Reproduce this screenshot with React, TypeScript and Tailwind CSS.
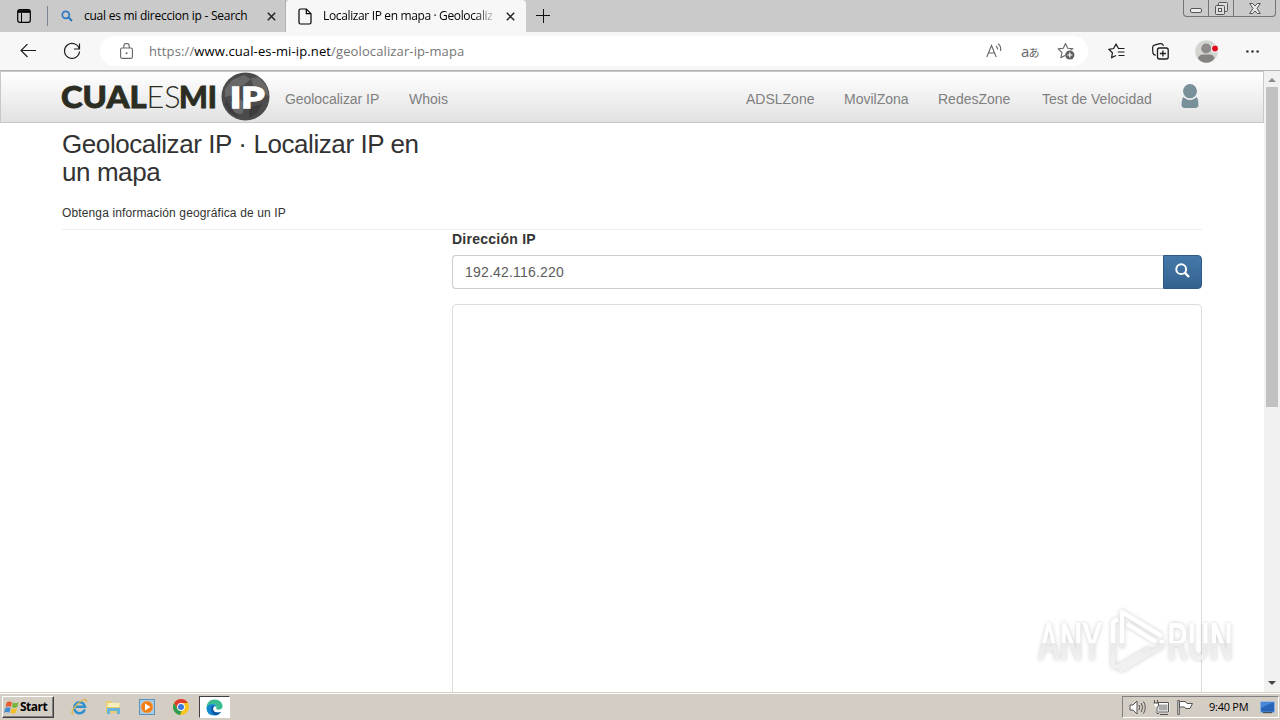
import type { ReactNode } from "react";

const UI = "font-['Open_Sans','Noto_Sans',sans-serif]";
const ARIAL = "font-['Liberation_Sans',Arial,sans-serif]";

const RIGHT_LINKS = [
  { label: "ADSLZone", className: "w-[98px]" },
  { label: "MovilZona", className: "w-[94px]" },
  { label: "RedesZone", className: "w-[104px]" },
  { label: "Test de Velocidad", className: "w-[139px]" },
] as const;

function Icon({ className = "", box, children }: { className?: string; box: string; children: ReactNode }) {
  return (
    <svg className={`block shrink-0 ${className}`} viewBox={box} fill="none" stroke="currentColor" aria-hidden="true">
      {children}
    </svg>
  );
}

function CloseIcon() {
  return (
    <Icon box="0 0 9 9" className="h-[9px] w-[9px] text-[#222]">
      <path d="M.8.8l7.4 7.4M8.2.8.8 8.2" strokeWidth="1.5" />
    </Icon>
  );
}

function TabStrip() {
  return (
    <div className={`flex h-8 bg-[#cacaca] text-[12px] text-black ${UI}`}>
      <div className="flex h-8 w-[286px] shrink-0 items-center border-r border-[#b0b0b0]">
        <Icon box="0 0 14 14" className="ml-[17px] h-[14px] w-[14px]">
          <rect x=".7" y=".7" width="12.6" height="12.6" rx="2" strokeWidth="1.2" />
          <path d="M1 2.500h12" strokeWidth="2.600" />
          <path d="M4.500 4v9" strokeWidth="1" />
        </Icon>
        <span className="ml-4 h-5 w-px bg-[#7c8490]" />
        <Icon box="0 0 12 12" className="ml-[13px] h-3 w-3 text-[#2a78c4]">
          <circle cx="4.8" cy="4.8" r="3.5" strokeWidth="1.7" />
          <path d="M7.3 7.3l3.7 3.7" strokeWidth="2" />
        </Icon>
        <span className="ml-[11px] w-[183px] whitespace-nowrap tracking-[-0.25px]">
          cual es mi direccion ip - Search
        </span>
        <CloseIcon />
      </div>
      <div className="flex h-8 w-[240px] shrink-0 items-center rounded-t-[4px] bg-[#f7f7f7]">
        <Icon box="0 0 14 17" className="ml-3 h-[17px] w-[14px]">
          <path d="M2.500 1h5.800L13 5.700v8.800c0 .8-.7 1.500-1.500 1.500h-9C1.700 16 1 15.300 1 14.500v-12C1 1.700 1.700 1 2.500 1zM8.300 1v4.700H13" strokeWidth="1.200" />
        </Icon>
        <span className="ml-[11px] w-[174px] overflow-hidden whitespace-nowrap tracking-[-0.36px] [mask-image:linear-gradient(to_right,black_152px,transparent_174px)]">
          Localizar IP en mapa · Geolocaliz
        </span>
        <span className="ml-[9px]">
          <CloseIcon />
        </span>
      </div>
      <Icon box="0 0 14 14" className="mt-[9px] ml-[10px] h-[14px] w-[14px] text-[#111]">
        <path d="M7.500 0v14M0 6.500h14" strokeWidth="1" />
      </Icon>
      <div className="mr-1 ml-auto flex h-[17px] w-[93px] rounded-b-[4px] border border-t-0 border-[#747474] text-[#555]">
        <div className="flex w-[25px] items-center justify-center border-r border-[#747474]">
          <Icon box="0 0 12 5" className="mt-[5px] h-[5px] w-3">
            <rect x=".5" y=".5" width="11" height="4" rx="1.500" fill="#eee" />
          </Icon>
        </div>
        <div className="flex w-[25px] justify-center border-r border-[#747474]">
          <Icon box="0 0 13 13" className="mt-[2px] h-[13px] w-[13px]">
            <rect x="3.500" y=".5" width="9" height="9" rx="1" fill="#ddd" />
            <rect x=".5" y="3.500" width="9" height="9" rx="1" fill="#ddd" />
            <rect x="3.500" y="6.500" width="3" height="3" fill="#eee" />
          </Icon>
        </div>
        <div className="flex flex-1 justify-center">
          <Icon box="0 0 12 11" className="mt-[3px] h-[11px] w-3">
            <path d="M.7.5h3L6 3 8.300.5h3L8 5.500l3.300 5h-3L6 8l-2.300 2.500h-3L4 5.500z" fill="#e8e8e8" />
          </Icon>
        </div>
      </div>
    </div>
  );
}

function Toolbar() {
  return (
    <div className="flex h-[39px] items-center border-b border-[#b4b4b4] bg-[#f7f7f7] text-[#1b1b1b]">
      <Icon box="0 0 16 14" className="ml-5 h-[14px] w-4">
        <path d="M16 6.500H1M7.500 0 1 6.500 7.500 13" strokeWidth="1.100" />
      </Icon>
      <Icon box="0 0 18 18" className="ml-[27px] h-[18px] w-[18px]">
        <path d="M16.300 7A7.500 7.500 0 1 0 16.500 9.500M16.500 1.500v5.500H11" strokeWidth="1.200" />
      </Icon>
      <div className="ml-[19px] flex h-[30px] w-[988px] shrink-0 items-center rounded-full bg-white text-[#666]">
        <Icon box="0 0 13 16" className="ml-[20px] h-4 w-[13px]">
          <rect x=".6" y="5" width="11.800" height="10.400" rx="1.500" strokeWidth="1.100" />
          <path d="M3.800 5V3.200a2.700 2.700 0 0 1 5.400 0V5" strokeWidth="1.100" />
          <circle cx="6.500" cy="10.200" r="1" fill="currentColor" stroke="none" />
        </Icon>
        <span className={`mt-px ml-4 whitespace-nowrap text-[13px] tracking-[0.12px] text-[#757575] ${UI}`}>
          https://<span className="text-black">www.cual-es-mi-ip.net</span>/geolocalizar-ip-mapa
        </span>
        <Icon box="0 0 17 16" className="mr-[18px] ml-auto h-4 w-[17px]">
          <path d="M.8 14 5.500 2.500l4.700 11.500M2.400 10h6.200M10 3q1.700 1.200 1.600 3.500M12 .800Q15.500 3 14.500 8" strokeWidth="1.100" />
        </Icon>
        <span className="mr-[18px] w-[18px] whitespace-nowrap font-['Open_Sans','Noto_Sans_CJK_JP',sans-serif] text-[15px] leading-none tracking-[-0.8px]">
          a<span className="text-[11px]">あ</span>
        </span>
        <Icon box="0 0 18 18" className="mr-[13px] h-[18px] w-[18px]">
          <path d="M13.600 8 16 6.800l-5.300-.6L8.500 1.500 6.300 6.200l-5.100.7 3.700 3.600-1 5.200L8 13.500" strokeWidth="1.100" strokeLinejoin="round" />
          <circle cx="12.800" cy="13" r="4.600" fill="#606060" stroke="none" />
          <path d="M12.800 10.500v5M10.300 13h5" stroke="#fff" strokeWidth="1.200" />
        </Icon>
      </div>
      <Icon box="0 0 17 16" className="ml-[20px] h-4 w-[17px]">
        <path d="M10.500 5.500 8 1 5.700 5.500.8 6.300l3.600 3.500-.8 5L8 12.500M10 5.500h6.500M9.800 9H16.500M10.500 12.500h6" strokeWidth="1.200" strokeLinejoin="round" />
      </Icon>
      <Icon box="0 0 17 17" className="ml-[27px] h-[17px] w-[17px]">
        <path d="M3.800 12.200A3 3 0 0 1 .9 10L.6 5A3 3 0 0 1 3 1.900L8 .7a3 3 0 0 1 3.500 2.200" strokeWidth="1.200" />
        <rect x="5.500" y="5" width="10.700" height="11" rx="2" strokeWidth="1.300" />
        <path d="M10.900 7.500v6M7.900 10.500h6" strokeWidth="1.300" />
      </Icon>
      <Icon box="0 0 24 23" className="ml-[26px] h-[23px] w-6">
        <g stroke="none">
          <circle cx="11.500" cy="11.500" r="11.300" fill="#d2d5d0" />
          <circle cx="11.200" cy="8.500" r="5" fill="#8f8b8b" />
          <path d="M3 18.500Q4 14.500 8 14.500h7q3.500 0 4.500 4-3.500 4.300-8.300 4.300T3 18.500z" fill="#858282" />
          <circle cx="20" cy="8.500" r="3.900" fill="#f3f3f3" />
          <circle cx="20" cy="8.500" r="2.900" fill="#e00b1c" />
        </g>
      </Icon>
      <Icon box="0 0 13 3" className="ml-[27px] h-[3px] w-[13px]">
        <path d="M.3 1.500h2.200M5.400 1.500h2.200M10.500 1.500h2.200" strokeWidth="2.200" />
      </Icon>
    </div>
  );
}

function Logo() {
  return (
    <svg className="block h-[50px] w-[208px] shrink-0 overflow-visible" viewBox="0 0 208 50" aria-label="CUALESMI IP">
      <g fontFamily="Lato, sans-serif" fontSize="30.500" fill="#2b2d22">
        <text x="-1" y="35.800" fontWeight="900" stroke="#2b2d22" strokeWidth=".8" textLength="85.500" lengthAdjust="spacingAndGlyphs">CUAL</text>
        <text x="84.500" y="35.800" fontWeight="300" textLength="34" lengthAdjust="spacingAndGlyphs">ES</text>
        <text x="117" y="35.800" fontWeight="900" stroke="#2b2d22" strokeWidth=".8" textLength="38" lengthAdjust="spacingAndGlyphs">MI</text>
      </g>
      <circle cx="183.500" cy="24.500" r="24" fill="#4b4b4b" />
      <path d="M163 17l7-9 12-5 7 4-7 6-8 3-3 7-8 2zM169 30l9-3 6 5-4 10-8-1zM189 6l8-1 8 10 2 9-7-3-8-5z" fill="#686868" />
      <path d="M164 27l5 9 9 10-9-5-6-8zM187 36l13-4-5 9-8 5z" fill="#3c3c3c" />
      <text x="168" y="35.500" fontFamily="Lato, sans-serif" fontWeight="900" fontSize="29" fill="#fff" stroke="#fff" strokeWidth="1.300" textLength="34.500" lengthAdjust="spacingAndGlyphs">IP</text>
    </svg>
  );
}

function Navbar() {
  return (
    <div className="h-[52px] border border-[#c8c8c8] bg-linear-to-b from-white to-[#e2e2e2]">
      <div className={`ml-[61px] flex h-[50px] w-[1140px] text-[14px] text-[#808080] ${ARIAL}`}>
        <Logo />
        <span className="ml-[15px] w-[124px] pt-[17px] leading-5 tracking-[-0.05px]">Geolocalizar IP</span>
        <span className="pt-[17px] leading-5">Whois</span>
        <div className="ml-auto flex shrink-0 pt-[17px] leading-5">
          {RIGHT_LINKS.map((link) => (
            <span key={link.label} className={`whitespace-nowrap ${link.className}`}>
              {link.label}
            </span>
          ))}
        </div>
        <svg className="mt-[12px] mr-[3px] block h-[25px] w-[18px] shrink-0" viewBox="0 0 18 25" fill="#78909a">
          <path d="M2.500 13Q9 19.500 15.500 13q2 2 1.900 8 0 3-3.400 3H4q-3.400 0-3.400-3Q.5 15 2.500 13z" />
          <ellipse cx="9" cy="7.300" rx="6.900" ry="7.300" />
          <path d="M2.500 12Q9 18.500 15.500 12" fill="none" stroke="#eee" strokeWidth="1.100" />
        </svg>
      </div>
    </div>
  );
}

function Page() {
  return (
    <div className={`h-[621px] w-[1264px] overflow-hidden bg-white text-[#333] ${ARIAL}`}>
      <Navbar />
      <main className="ml-[62px] w-[1140px]">
        <h1 className="w-[370px] pt-[7px] text-[26px] leading-[28px] tracking-[-0.42px]">
          Geolocalizar IP · Localizar IP en
          <br />
          un mapa
        </h1>
        <p className="pt-[17px] text-[12px] leading-[20px] tracking-[0.13px]">Obtenga información geográfica de un IP</p>
        <hr className="mt-[6px] border-[#eee]" />
        <div className="ml-[390px]">
          <label className="block h-[25px] text-[14px] leading-[19px] font-bold tracking-[0.25px]">Dirección IP</label>
          <div className="flex h-[34px]">
            <div className="flex-1 rounded-l-[4px] border border-r-0 border-[#ccc] pl-3 text-[14px] leading-[33px] tracking-[0.2px] text-[#5c5c5c]">
              192.42.116.220
            </div>
            <div className="flex w-[39px] justify-center rounded-r-[4px] border border-[#2b5a88] bg-linear-to-b from-[#4579aa] to-[#34628f] pt-[7px]">
              <Icon box="0 0 15 15" className="h-[15px] w-[15px] text-white">
                <circle cx="6.200" cy="6.200" r="4.900" strokeWidth="2" />
                <path d="m9.700 9.700 4.300 4.300" strokeWidth="2.400" />
              </Icon>
            </div>
          </div>
          <div className="mt-[15px] h-[400px] rounded-[4px] border border-[#ddd]" />
        </div>
      </main>
    </div>
  );
}

function Scrollbar() {
  return (
    <div className="flex h-[621px] w-4 flex-col items-center bg-[#f1f1f1]">
      <Icon box="0 0 8 4" className="mt-[7px] h-1 w-2 text-[#8c8c8c]">
        <path d="M0 4l4-4 4 4z" fill="currentColor" stroke="none" />
      </Icon>
      <div className="mt-[5px] h-[320px] w-3 bg-[#c1c1c1]" />
      <Icon box="0 0 8 4" className="mt-auto mb-[7px] h-1 w-2 text-[#444]">
        <path d="M0 0l4 4 4-4z" fill="currentColor" stroke="none" />
      </Icon>
    </div>
  );
}

function Watermark() {
  return (
    <svg
      className="absolute top-[604px] left-[1030px] h-[72px] w-[220px] opacity-90 drop-shadow-[0_0_2px_rgba(0,0,0,0.22)]"
      viewBox="0 0 220 72"
    >
      <defs>
        <linearGradient id="wm" x1="0" y1="19" x2="0" y2="57" gradientUnits="userSpaceOnUse">
          <stop offset=".53" stopColor="#fff" />
          <stop offset=".54" stopColor="#e9e9e9" />
          <stop offset="1" stopColor="#f0f0f0" />
        </linearGradient>
      </defs>
      <g fontFamily="Roboto, sans-serif" fontWeight="500" fontSize="51" fill="url(#wm)">
        <text x="8" y="56" textLength="64" lengthAdjust="spacingAndGlyphs">ANY</text>
        <text x="137" y="56" textLength="66" lengthAdjust="spacingAndGlyphs">RUN</text>
      </g>
      <g fill="none" stroke="url(#wm)" strokeWidth="4.500" strokeLinejoin="round">
        <path d="M88 15l-5 3v44l5 1 32-19" />
        <path d="M92 44V8l40 24M97 20l29 18" />
        <path d="M91 60v6l41-24v-6" />
      </g>
    </svg>
  );
}

function Taskbar() {
  return (
    <div className="flex h-7 border-t border-[#d4d0c8] bg-[#d4cdc4] shadow-[inset_0_1px_0_#fff]">
      <div className="mt-[3px] ml-[2px] flex h-[22px] w-[52px] items-center border border-t-white border-r-[#404040] border-b-[#404040] border-l-white shadow-[inset_-1px_-1px_0_#808080]">
        <Icon box="0 0 17 15" className="ml-px h-[15px] w-[16px]">
          <g stroke="none">
            <path d="M3 2q3-2 5.500 0L7.300 7Q5 5.500 1.700 7z" fill="#e65c2e" />
            <path d="M9.500 2.300q3 1.500 6-.3L14.200 7q-2.700 1.600-5.900.2z" fill="#79b43a" />
            <path d="M1.400 8Q5 6.600 7 8.100L5.700 13Q3 11.500 0 13z" fill="#418dd4" />
            <path d="M8 8.300q3 1.400 5.900 0L12.500 13q-3 1.800-5.800.200z" fill="#f4bf29" />
          </g>
        </Icon>
        <span className="font-['Open_Sans',sans-serif] text-[12px] font-bold tracking-[-0.5px] text-black">Start</span>
      </div>
      <Icon box="0 0 17 17" className="mt-[5px] ml-[17px] h-[17px] w-[17px]">
        <path d="M13.800 11.500A5.500 5.500 0 1 1 14 8.700H4" stroke="#2e91ce" strokeWidth="2.400" />
        <path d="M3.300 15.700C-1 17 1 11 6 6.400 11 1.500 16.500-.5 15.300 4" stroke="#e0b74c" strokeWidth="1.300" />
      </Icon>
      <Icon box="0 0 17 16" className="mt-[6px] ml-[17px] h-4 w-[17px]">
        <g stroke="none">
          <path d="M1 2h5l1 2h8v10H1z" fill="#e8cd70" />
          <path d="M2.500 4h12v4h-12z" fill="#f8efba" />
          <path d="M2 9h13v6h-3v-3H5v3H2z" fill="#67b5dc" />
        </g>
      </Icon>
      <Icon box="0 0 16 16" className="mt-[6px] ml-[17px] h-4 w-4">
        <rect x=".5" y=".5" width="15" height="15" fill="#a8cbe5" stroke="#5794c2" />
        <circle cx="8" cy="8" r="6" fill="#f07f18" stroke="#f9b36e" strokeWidth=".5" />
        <path d="M6 4.500 11.500 8 6 11.500z" fill="#fff" stroke="none" />
      </Icon>
      <Icon box="0 0 16 16" className="mt-[6px] ml-[18px] h-4 w-4">
        <g stroke="none">
          <circle cx="8" cy="8" r="8" fill="#f9c51c" />
          <path d="M1.100 4A8 8 0 0 1 14.900 4H8L4.600 10z" fill="#df3d30" />
          <path d="M1.100 4 4.600 10q1.500 2.300 4 2L7 16A8 8 0 0 1 1.100 4z" fill="#2c9d50" />
          <circle cx="8" cy="8" r="3.900" fill="#fff" />
          <circle cx="8" cy="8" r="3" fill="#3c79df" />
        </g>
      </Icon>
      <div className="mt-[3px] ml-[10px] flex h-[22px] w-[31px] items-center justify-center border border-t-[#404040] border-r-white border-b-white border-l-[#404040] bg-white">
        <Icon box="0 0 17 17" className="h-[17px] w-[17px]">
          <g stroke="none">
            <path d="M.5 9C.5 3.500 4 .5 8.500.5 13.500.5 17 4 16.500 8c-.5 2.700-4.500 3.300-6 2-.8-.7 0-1.200 0-2.300C10.300 4.500 4 4 .5 9z" fill="#39bd90" />
            <path d="M.5 9Q2 5 6.500 5q3.500 0 4 2.700Q7.200 6.300 7 10q.5 5 8 3-2.500 3.500-6.500 3.500-8 0-8-7.500z" fill="#1587d2" />
            <path d="M5.200 9q-.2 7 5 7.200 3-.7 4.800-3.200-7 2-8-3 0-2 1-3Q5.600 6.500 5.200 9z" fill="#11569f" />
          </g>
        </Icon>
      </div>
      <div className="mt-[3px] mr-[1px] ml-auto flex h-[22px] w-[157px] items-center border border-t-[#808080] border-r-white border-b-white border-l-[#808080] text-[#555]">
        <Icon box="0 0 17 15" className="ml-[6px] h-[15px] w-[17px]">
          <path d="M1 5h3l4-4v13l-4-4H1z" fill="#fff" />
          <path d="M10 5q1.500 2.500 0 5M12.200 3q3 4.500 0 9M14.500 1.500q3.500 6 0 12" />
        </Icon>
        <Icon box="0 0 17 15" className="ml-[7px] h-[15px] w-[17px]">
          <rect x="4.500" y="3.500" width="11" height="8" fill="#aaa" stroke="#fff" strokeWidth="2" />
          <path d="M3.500 2.500h12v9.500H5M7 14.500h8M1.500 0v3M4.500 0v3" />
          <path d="M.5 3h5v3l-1.500 1v6.500h2" fill="#fff" />
        </Icon>
        <Icon box="0 0 16 15" className="ml-[7px] h-[15px] w-4">
          <path d="M.8.5h1.500v14H.8zM2.500 1.500h6l1.500 2h5.500l-2.500 5H8.500l-1-1.500h-5z" fill="#fff" />
        </Icon>
        <span className={`ml-[16px] w-[51px] whitespace-nowrap text-[11px] tracking-[-0.25px] text-black ${UI}`}>
          9:40 PM
        </span>
        <Icon box="0 0 16 13" className="h-[13px] w-[15px]">
          <rect x=".5" y=".5" width="15" height="11" fill="#2865b9" stroke="#8fb8e4" />
          <path d="M1 7 14 1H1z" fill="#4888d8" stroke="none" />
          <path d="M3 12h10" stroke="#333" />
        </Icon>
      </div>
    </div>
  );
}

export default function App() {
  return (
    <div className="relative h-[720px] w-[1280px] overflow-hidden bg-white">
      <TabStrip />
      <Toolbar />
      <div className="flex">
        <Page />
        <Scrollbar />
      </div>
      <Taskbar />
      <Watermark />
    </div>
  );
}
